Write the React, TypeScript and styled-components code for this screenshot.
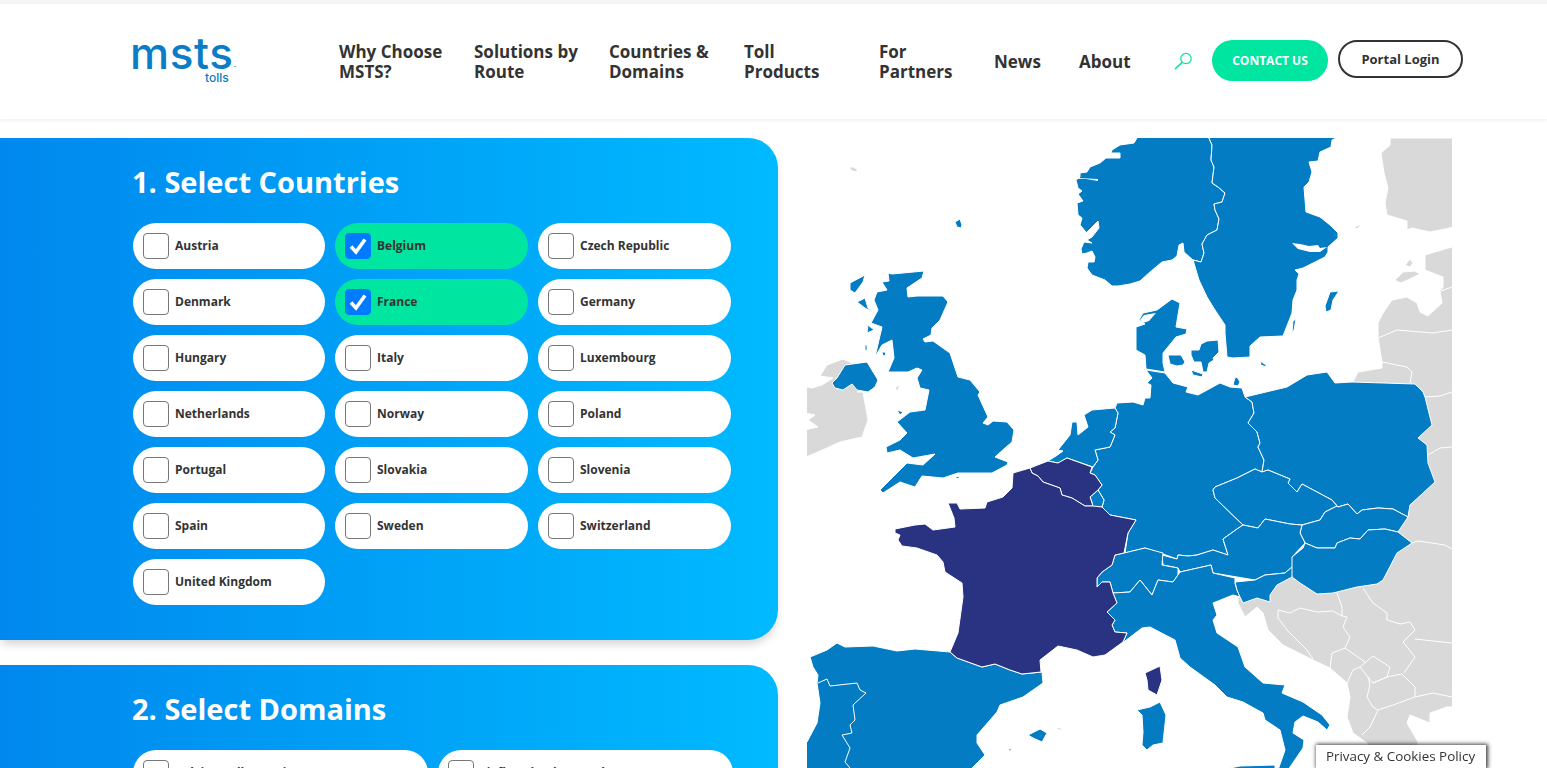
import React from 'react';
import styled, { createGlobalStyle } from 'styled-components';

const GlobalStyle = createGlobalStyle`
    html, body {
        margin: 0;
        padding: 0;
        background: #fff;
        overflow: hidden;
    }
    * { box-sizing: border-box; }
`;

const Page = styled.div`
    height: 100vh;
    overflow: hidden;
    padding-top: 4px;
    background: linear-gradient(#f6f6f6 4px, #fff 4px);
    font-family: "Open Sans", "Liberation Sans", sans-serif;
    color: #333;
`;
const Header = styled.header`
    display: flex;
    align-items: center;
    height: 115px;
    padding: 0 0 2px 132px;
    background: #fff;
    box-shadow: 0 1px 4px rgba(0, 0, 0, 0.08);
`;
const Logo = styled.a`
    display: flex;
    flex-direction: column;
    width: 207px;
    color: #0a7dc6;
    font-family: Inter, "Liberation Sans", sans-serif;
`;
const LogoWord = styled.span`
    margin-left: -2px;
    font-size: 44px;
    font-weight: 500;
    line-height: 31px;
    letter-spacing: 0.6px;
    white-space: nowrap;
`;
const LogoMark = styled.span`
    font-size: 4px;
    line-height: 0;
    letter-spacing: 0;
`;
const LogoSub = styled.span`
    margin: 3px 0 0 73px;
    font-size: 12px;
    font-weight: 500;
    line-height: 11px;
`;
const Nav = styled.nav`
    display: flex;
    align-items: center;
    margin-top: 2px;
`;
const NavItem = styled.a<{ $width: number }>`
    width: ${(p) => p.$width}px;
    font-size: 17px;
    font-weight: 700;
    line-height: 20px;
    color: #333;
`;
const SearchButton = styled.span`
    display: flex;
    width: 38px;
`;
const Actions = styled.div`
    display: flex;
    align-items: flex-start;
    gap: 10px;
    height: 41px;
`;
const ContactButton = styled.a`
    display: flex;
    align-items: center;
    justify-content: center;
    width: 116px;
    height: 41px;
    border-radius: 21px;
    background: #00e6a0;
    color: #fff;
    font-size: 12px;
    font-weight: 700;
`;
const PortalButton = styled.a`
    display: flex;
    align-items: center;
    justify-content: center;
    width: 125px;
    height: 38px;
    border: 2px solid #333;
    border-radius: 19px;
    background: #fff;
    color: #333;
    font-size: 13px;
    font-weight: 700;
`;
const Main = styled.main`
    display: flex;
    align-items: flex-start;
    padding-top: 19px;
`;
const Column = styled.div`
    display: flex;
    flex-direction: column;
    flex-shrink: 0;
    gap: 25px;
    width: 778px;
`;
const Panel = styled.section`
    padding: 24px 45px 35px 133px;
    border-radius: 0 30px 30px 0;
    background: linear-gradient(90deg, #0088ee 0%, #00baff 100%);
    box-shadow: 0 6px 10px -2px rgba(0, 0, 0, 0.18);
`;
const PanelTitle = styled.h2`
    margin: 0 0 21px -1px;
    color: #fff;
    font-size: 29px;
    font-weight: 700;
    line-height: 40px;
`;
const Grid = styled.div<{ $columns: string }>`
    display: grid;
    grid-template-columns: ${(p) => p.$columns};
    gap: 10px;
`;
const Pill = styled.label<{ $checked?: boolean }>`
    display: flex;
    align-items: center;
    gap: 6px;
    height: 46px;
    padding-left: 10px;
    border-radius: 23px;
    background: ${(p) => (p.$checked ? '#00e6a0' : '#fff')};
    color: #333;
    font-size: 12px;
    font-weight: 700;
`;
const PillLabel = styled.span`
    margin-bottom: 2px;
`;
const Box = styled.span<{ $checked?: boolean }>`
    display: flex;
    align-items: center;
    justify-content: center;
    flex-shrink: 0;
    width: 26px;
    height: 26px;
    border: 1px solid ${(p) => (p.$checked ? '#007bff' : '#777')};
    border-radius: 4px;
    background: ${(p) => (p.$checked ? '#007bff' : '#fff')};
`;
const MapCanvas = styled.svg`
    display: block;
    flex-shrink: 0;
    margin-left: 29px;
    width: 645px;
    height: 640px;
`;
const Land = styled.polygon<{ $tone: 'blue' | 'purple' | 'grey' | 'white' }>`
    fill: ${(p) =>
        ({ blue: '#047cc3', purple: '#2a3282', grey: '#d9d9d9', white: '#fff' })[p.$tone]};
    stroke: ${(p) => (p.$tone === 'white' ? 'none' : '#fff')};
    stroke-width: 1;
    stroke-linejoin: round;
`;
const Border = styled.polyline`
    fill: none;
    stroke: #fff;
    stroke-width: 1;
    stroke-linejoin: round;
`;
const PrivacyBadge = styled.a`
    position: fixed;
    left: 1316px;
    bottom: 0;
    width: 170px;
    height: 23px;
    padding: 2px 1px 0 0;
    background: #fff;
    color: #333;
    font-size: 13.4px;
    line-height: 18px;
    text-align: center;
    white-space: nowrap;
    box-shadow: 1px 0 4px 1px rgba(0, 0, 0, 0.75);
`;

const countries = [
    'Austria', 'Belgium', 'Czech Republic', 'Denmark', 'France', 'Germany', 'Hungary',
    'Italy', 'Luxembourg', 'Netherlands', 'Norway', 'Poland', 'Portugal', 'Slovakia',
    'Slovenia', 'Spain', 'Sweden', 'Switzerland', 'United Kingdom',
];
const selected = ['Belgium', 'France'];
const domains = ['Belgian Toll Domains', 'Liefkenshoek Tunnel'];

type Tone = 'blue' | 'purple' | 'grey' | 'white';

// traced by hand, coordinates are page pixels
const land: [Tone, string][] = [
    ['grey', '1390,138 1455,138 1455,227 1430,232 1412,228 1407,230 1407,221 1387,215 1385,203 1388,188 1384,173 1381,153 1390,145'],
    ['grey', '1354,227 1362,224 1357,229'],
    ['grey', '1405,265 1410,259 1413,263 1410,267'],
    ['grey', '1395,280 1403,272 1415,271 1420,274 1408,280 1400,283'],
    ['grey', '1455,246 1425,255 1425,270 1443,277 1443,287 1440,291 1442,303 1428,316 1420,312 1417,303 1407,297 1392,300 1383,313 1378,323 1378,338 1382,362 1382,368 1370,370 1358,372 1353,382 1400,450 1380,575 1300,575 1238,590 1238,603 1245,617 1257,607 1263,613 1268,630 1283,645 1313,660 1330,668 1347,683 1350,697 1347,717 1353,733 1367,743 1367,768 1418,768 1418,742 1407,723 1410,715 1430,723 1430,713 1447,707 1455,707'],
    ['grey', '807,387 812,388 822,385 833,378 820,376 827,365 843,359 850,362 868,380 857,392 863,392 868,420 862,437 840,442 827,448 804,458 804,430 818,427 808,420 815,415 804,413 804,387'],
    ['grey', '849,167 853,167 857,169 857,172 852,171'],
    ['grey', '895,388 899,385 899,388 897,391'],
    // norway
    ['blue', '1138,136 1208,136 1212,145 1211,160 1214,167 1212,183 1218,187 1225,193 1222,202 1214,204 1215,210 1219,219 1217,230 1207,235 1202,244 1204,253 1201,262 1193,260 1184,252 1183,243 1179,245 1177,256 1172,260 1162,262 1150,272 1140,281 1130,284 1118,286 1112,286 1105,280 1092,275 1087,268 1088,262 1094,262 1095,257 1092,251 1087,253 1082,254 1081,249 1084,242 1092,243 1087,240 1092,237 1099,228 1098,221 1089,230 1081,238 1079,240 1086,232 1080,225 1082,218 1078,215 1077,203 1083,201 1078,194 1082,191 1078,188 1076,180 1080,177 1080,173 1087,172 1090,167 1100,163 1106,158 1120,158 1120,153 1111,153 1112,150 1120,145 1134,143'],
    ['white', '1077,178 1098,179 1098,181 1086,179 1077,179'],
    // sweden
    ['blue', '1208,136 1340,136 1332,140 1331,147 1320,152 1318,161 1309,162 1312,172 1309,182 1304,187 1306,212 1320,217 1330,225 1338,233 1338,238 1328,247 1328,252 1325,257 1313,263 1303,268 1295,270 1299,274 1297,280 1297,290 1293,300 1292,313 1283,336 1260,337 1250,346 1250,357 1233,358 1227,357 1225,333 1225,325 1215,310 1207,297 1199,280 1193,260 1201,262 1204,253 1202,244 1207,235 1217,230 1219,219 1215,210 1214,204 1222,202 1225,193 1218,187 1212,183 1214,167 1211,160 1212,145'],
    ['white', '1292,243 1300,244 1309,246 1318,245 1320,248 1327,247 1320,252 1310,252 1298,249'],
    ['blue', '1325,306 1330,292 1339,291 1333,300 1331,310 1326,312'],
    ['blue', '1293,321 1296,319 1294,330 1292,333'],
    // denmark
    ['blue', '1172,299 1180,303 1176,327 1187,329 1186,334 1176,337 1163,353 1163,363 1165,372 1146,369 1145,355 1136,350 1136,327 1145,324 1139,320 1143,313 1157,310'],
    ['white', '1140,320 1144,315 1156,313 1149,321 1143,323'],
    ['blue', '1168,355 1181,355 1185,362 1183,365 1177,366 1170,364'],
    ['blue', '1191,350 1199,350 1201,344 1207,341 1218,340 1219,352 1213,358 1214,360 1209,363 1207,372 1203,372 1201,362 1194,362 1191,355'],
    ['blue', '1191,370 1203,374 1202,377 1193,375'],
    ['blue', '1260,361 1266,365 1266,367 1261,365'],
    ['blue', '1234,381 1235,378 1237,377 1240,382 1238,386 1233,385'],
    // germany
    ['blue', '1117,403 1133,402 1143,405 1145,398 1150,398 1151,385 1147,383 1152,378 1146,370 1165,373 1173,383 1188,387 1186,392 1198,395 1220,383 1230,387 1242,388 1245,397 1252,402 1254,413 1248,423 1257,432 1260,443 1258,447 1264,460 1262,472 1255,469 1237,478 1215,487 1213,490 1215,498 1243,525 1237,529 1223,539 1228,555 1213,550 1197,555 1188,556 1178,555 1177,559 1163,554 1145,548 1125,553 1128,533 1136,520 1110,515 1102,507 1104,500 1098,490 1102,485 1095,475 1090,473 1093,467 1098,460 1095,450 1110,447 1115,435 1110,432 1115,428 1118,413 1115,408'],
    // netherlands
    ['blue', '1058,450 1070,435 1072,422 1077,422 1078,435 1088,427 1084,415 1092,410 1115,408 1118,413 1115,428 1110,432 1115,435 1110,447 1095,450 1098,460 1093,467 1067,458 1058,463 1048,461 1056,456 1063,451'],
    // poland
    ['blue', '1245,397 1287,387 1307,375 1327,372 1335,383 1352,382 1415,384 1423,392 1425,397 1432,425 1418,438 1427,445 1428,463 1435,482 1410,505 1408,517 1393,509 1378,508 1362,510 1357,514 1348,504 1338,507 1332,500 1317,492 1302,484 1297,492 1288,483 1290,479 1268,470 1262,472 1264,460 1258,447 1260,443 1257,432 1248,423 1254,413 1252,402'],
    // czech republic
    ['blue', '1255,469 1262,472 1268,470 1290,479 1288,483 1297,492 1302,484 1317,492 1332,500 1337,506 1325,512 1320,520 1302,525 1290,524 1265,519 1258,528 1243,525 1215,498 1213,490 1215,487 1237,478'],
    // slovakia
    ['blue', '1337,506 1338,507 1348,504 1357,514 1362,510 1378,508 1393,509 1408,517 1398,532 1385,529 1368,530 1360,539 1350,538 1337,543 1335,548 1317,548 1305,543 1300,533 1302,525 1320,520 1325,512'],
    // hungary
    ['blue', '1305,543 1317,548 1335,548 1337,543 1350,538 1360,539 1368,530 1385,529 1398,532 1412,543 1397,553 1383,580 1377,584 1357,587 1333,593 1317,594 1300,583 1292,577 1288,568 1292,557 1303,548'],
    // austria
    ['blue', '1243,525 1258,528 1265,519 1290,524 1302,525 1300,533 1305,543 1292,557 1292,567 1285,573 1265,575 1255,580 1213,573 1211,565 1180,572 1178,568 1163,565 1162,555 1177,559 1178,555 1188,556 1197,555 1213,550 1228,555 1223,539 1237,529'],
    // switzerland
    ['blue', '1124,553 1145,548 1163,553 1162,565 1178,568 1178,575 1173,582 1158,580 1152,595 1140,580 1130,592 1113,593 1110,582 1102,582 1097,587 1097,578 1102,572 1112,565 1115,555'],
    // italy
    ['blue', '1113,593 1130,592 1140,580 1152,595 1158,580 1173,582 1180,572 1211,565 1213,573 1235,578 1235,583 1237,590 1240,597 1233,595 1213,603 1217,615 1213,620 1217,633 1238,647 1245,667 1263,683 1285,685 1282,693 1303,702 1322,715 1330,725 1327,730 1318,722 1303,716 1295,722 1293,733 1304,740 1303,748 1288,770 1278,770 1285,750 1280,730 1265,720 1263,713 1243,702 1227,697 1215,685 1190,667 1180,658 1175,640 1150,627 1142,628 1125,641 1123,642 1127,633 1115,632 1112,625 1115,620 1107,612 1117,603'],
    ['blue', '1220,770 1240,766 1275,765 1275,772 1220,772'],
    // slovenia
    ['blue', '1235,582 1255,580 1265,575 1285,573 1292,567 1292,577 1277,585 1270,595 1270,602 1257,598 1243,603 1240,597 1237,590'],
    ['blue', '1137,710 1150,707 1160,702 1166,715 1163,743 1153,745 1147,750 1142,745 1143,732 1142,715'],
    // spain and portugal
    ['blue', '810,657 827,650 837,643 845,647 873,646 897,651 915,649 950,652 957,658 982,667 995,664 1010,670 1022,674 1042,672 1043,683 1023,697 1000,705 997,712 977,735 977,743 985,755 970,770 804,770 804,745 807,742 817,723 820,703 817,683 818,675 813,667'],
    ['blue', '1028,735 1040,729 1047,733 1042,742 1033,738'],
    ['blue', '1056,727 1062,729 1060,730'],
    ['blue', '1007,750 1012,748 1010,751'],
    // great britain
    ['blue', '888,273 892,274 924,271 922,278 907,288 908,297 917,296 943,296 948,302 940,320 932,328 931,335 923,339 925,342 933,341 950,353 958,377 970,380 980,392 978,395 988,417 983,423 988,425 993,421 1007,422 1014,430 1012,442 1005,448 995,457 1008,462 1007,465 992,473 958,473 943,478 922,476 915,487 900,482 883,493 880,490 898,472 907,463 923,465 935,454 913,458 900,450 887,453 886,447 900,440 907,433 897,422 910,412 925,410 927,400 929,390 920,388 917,378 922,370 917,368 908,372 888,372 894,358 892,340 882,345 875,357 882,327 871,323 878,310 874,300 877,292 887,290 882,282 889,281'],
    ['blue', '832,383 837,378 845,365 867,362 878,380 875,387 868,392 857,390 852,384 843,390 835,388'],
    ['blue', '850,283 865,275 863,282 855,293 850,290'],
    ['blue', '857,302 865,298 868,308 873,312 865,308'],
    ['blue', '868,325 874,330 867,333'],
    ['blue', '865,345 867,345 867,351 865,350'],
    ['blue', '882,352 885,352 886,355 883,356'],
    ['blue', '897,410 903,412 900,415'],
    ['blue', '955,222 960,219 962,225 961,228 957,227'],
    ['blue', '955,477 960,476 958,479'],
    // luxembourg
    ['blue', '1098,490 1104,500 1102,507 1092,507 1092,502 1090,497'],
    // belgium, france, corsica
    ['purple', '1030,468 1048,461 1058,463 1067,458 1092,467 1090,473 1095,475 1102,485 1098,490 1090,497 1093,506 1085,506 1072,498 1062,495 1060,488 1043,482 1038,476 1032,473'],
    ['purple', '1030,468 1013,473 1012,488 1003,497 987,502 985,508 960,509 957,503 948,503 954,518 955,527 933,530 925,524 915,525 895,529 895,533 900,535 898,540 902,546 917,548 937,555 943,562 945,572 962,583 963,597 958,633 950,652 957,658 982,667 995,664 1010,670 1022,674 1041,672 1040,660 1058,646 1077,650 1093,657 1105,655 1123,642 1127,633 1115,632 1112,625 1115,620 1107,612 1117,603 1113,593 1110,582 1102,582 1097,587 1097,578 1102,572 1112,565 1115,555 1124,553 1128,533 1136,520 1110,515 1102,507 1093,506 1085,506 1072,498 1062,495 1060,488 1043,482 1038,476 1032,473'],
    ['purple', '1145,673 1160,666 1162,680 1157,695 1148,690 1147,680'],
];

const borders = [
    '818,683 827,679 830,686 857,683 860,690 866,693 853,705 855,720 850,725 852,733 842,735 850,748 845,762 850,768',
    '1452,287 1441,291',
    '1378,338 1397,330 1433,333 1452,330',
    '1382,362 1407,367 1412,372 1410,383',
    '1425,397 1440,396 1452,392',
    '1428,455 1440,448 1452,447',
    '1412,543 1418,541 1445,545 1452,549',
    '1278,610 1290,613 1300,608 1317,612 1333,611 1342,616 1347,617 1343,627 1350,637 1345,648',
    '1278,610 1278,618 1287,630 1307,650 1313,659',
    '1337,593 1342,607 1342,616',
    '1363,588 1373,603 1387,613 1387,620 1400,624 1410,622 1415,630 1403,642 1415,657 1404,673',
    '1415,639 1452,643',
    '1345,648 1365,662',
    '1345,648 1332,653 1330,668',
    '1360,667 1373,656 1390,667 1387,677 1373,683 1368,677 1360,667',
    '1347,683 1353,670 1360,667',
    '1368,677 1370,685 1367,697 1373,707 1378,710 1370,727 1362,735',
    '1373,683 1387,677 1402,674 1415,687 1415,697 1393,705 1378,710',
    '1415,697 1433,693 1452,697',
];

const App = () => {
    return (
        <Page>
            <GlobalStyle />
            <Header>
                <Logo>
                    <LogoWord>msts<LogoMark>™</LogoMark></LogoWord>
                    <LogoSub>tolls</LogoSub>
                </Logo>
                <Nav>
                    <NavItem $width={135}>Why Choose<br />MSTS?</NavItem>
                    <NavItem $width={135}>Solutions by<br />Route</NavItem>
                    <NavItem $width={135}>Countries &amp;<br />Domains</NavItem>
                    <NavItem $width={135}>Toll<br />Products</NavItem>
                    <NavItem $width={115}>For<br />Partners</NavItem>
                    <NavItem $width={85}>News</NavItem>
                    <NavItem $width={95}>About</NavItem>
                </Nav>
                <SearchButton>
                    <svg width="19" height="18" viewBox="0 0 19 18" fill="none" stroke="#00e6a0" strokeWidth="1.2">
                        <circle cx="12" cy="6.5" r="5.2" />
                        <path d="M8.2 10.4 1 17" strokeWidth="1.6" />
                    </svg>
                </SearchButton>
                <Actions>
                    <ContactButton>CONTACT US</ContactButton>
                    <PortalButton>Portal Login</PortalButton>
                </Actions>
            </Header>
            <Main>
                <Column>
                    <Panel>
                        <PanelTitle>1. Select Countries</PanelTitle>
                        <Grid $columns="192px 193px 193px">
                            {countries.map((name) => {
                                const checked = selected.includes(name);
                                return (
                                    <Pill key={name} $checked={checked}>
                                        <Box $checked={checked}>
                                            {checked && (
                                                <svg width="20" height="20" viewBox="0 0 20 20" fill="none" stroke="#fff" strokeWidth="3.6">
                                                    <path d="M3 10.5 8 16 17 3.5" />
                                                </svg>
                                            )}
                                        </Box>
                                        <PillLabel>{name}</PillLabel>
                                    </Pill>
                                );
                            })}
                        </Grid>
                    </Panel>
                    <Panel>
                        <PanelTitle>2. Select Domains</PanelTitle>
                        <Grid $columns="295px 295px">
                            {domains.map((name) => (
                                <Pill key={name}>
                                    <Box />
                                    <PillLabel>{name}</PillLabel>
                                </Pill>
                            ))}
                        </Grid>
                    </Panel>
                </Column>
                <MapCanvas viewBox="807 138 645 640">
                    {land.map(([tone, points], i) => (
                        <Land key={i} $tone={tone} points={points} />
                    ))}
                    {borders.map((points, i) => (
                        <Border key={i} points={points} />
                    ))}
                </MapCanvas>
            </Main>
            <PrivacyBadge>Privacy &amp; Cookies Policy</PrivacyBadge>
        </Page>
    );
};

export default App;
